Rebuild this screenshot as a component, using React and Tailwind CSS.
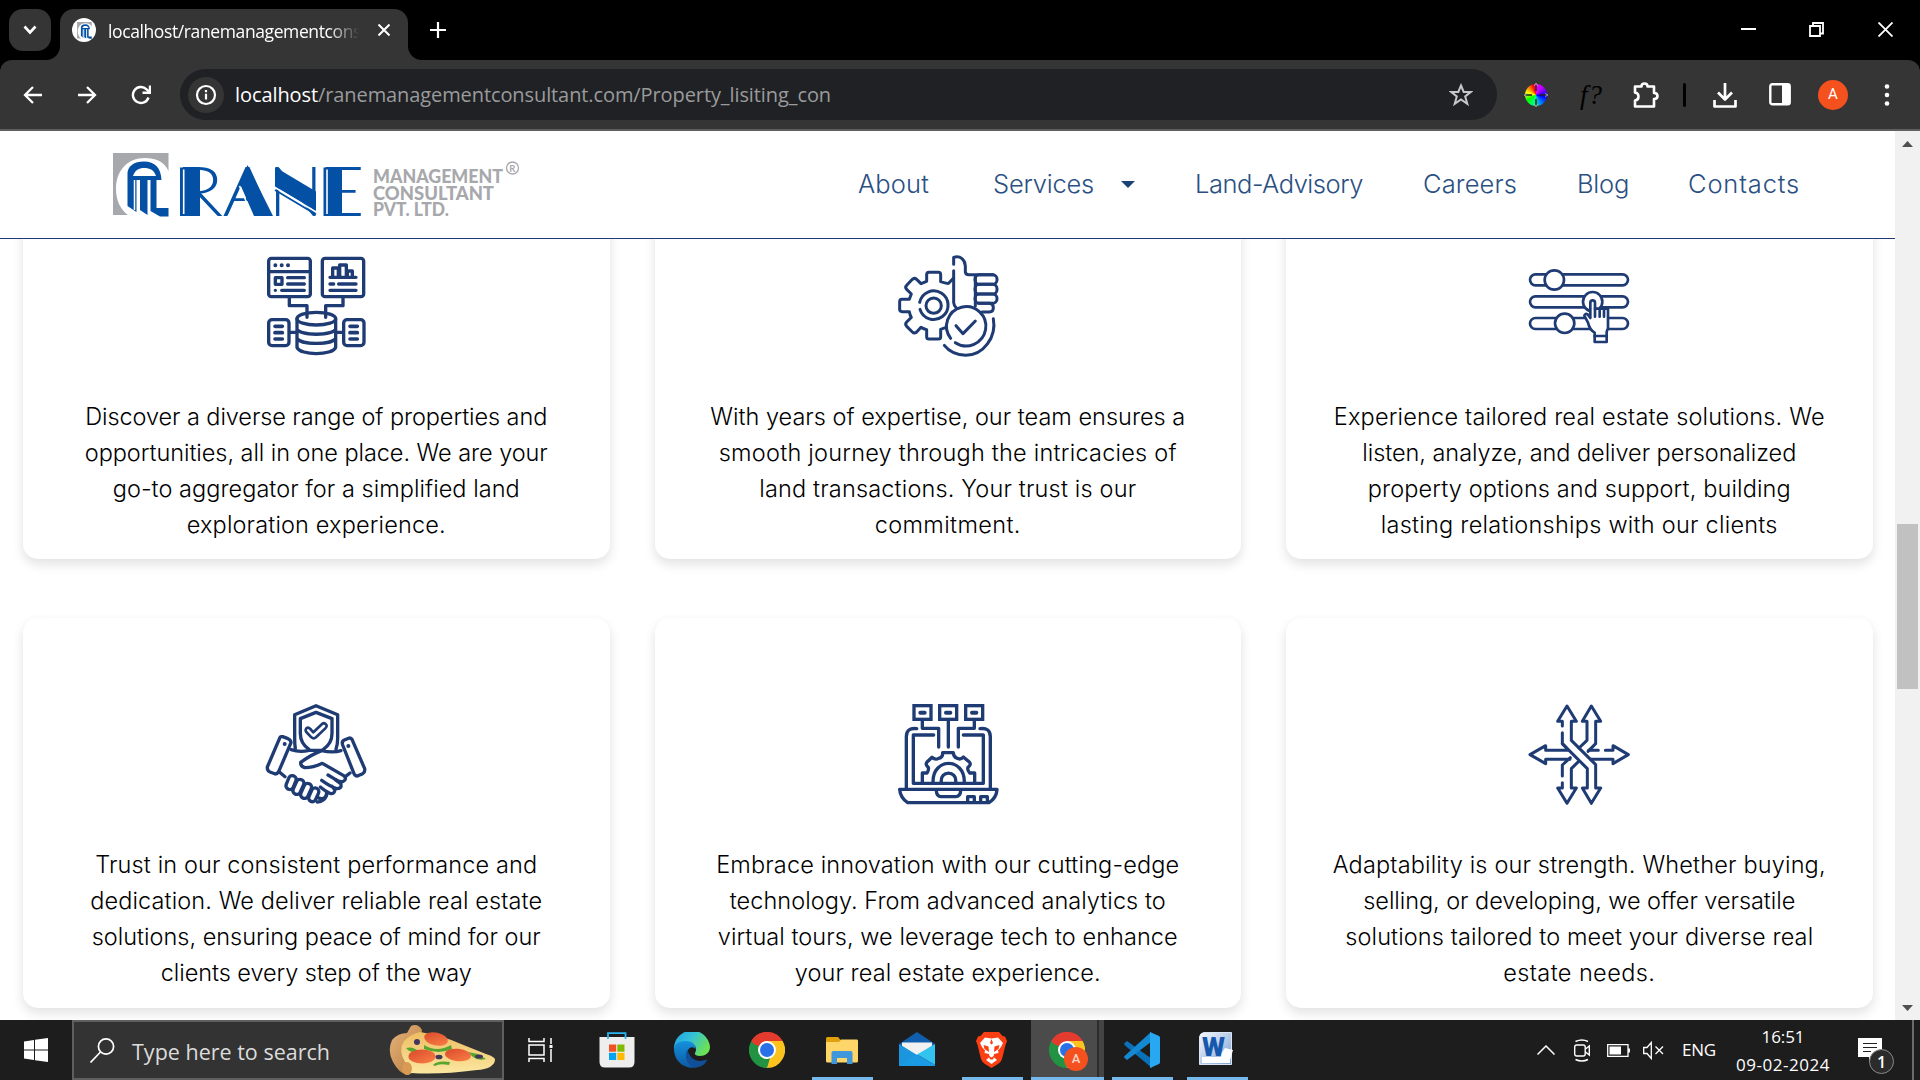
import { useLayoutEffect, useRef, useState } from "react";

/* Text run whose tracking is tuned so that it fills the given width. */
function Fit({ w, children, className = "" }) {
  const ref = useRef(null);
  const [ls, setLs] = useState(0);
  useLayoutEffect(() => {
    const el = ref.current;
    const natural = el.getBoundingClientRect().width;
    setLs((w - natural) / el.textContent.length);
  }, [w]);
  return (
    <span ref={ref} className={"inline-block whitespace-nowrap " + className} style={{ letterSpacing: ls + "px" }}>
      {children}
    </span>
  );
}

const UI = "font-['Open_Sans','Noto_Sans',sans-serif]";
const PAGE = "font-['Inter',sans-serif]";

/* ---------- logo ---------- */
function Emblem() {
  return (
    <>
      <path d="M0 0H55.500V18C51 8 42 5 32 5C14 5 3 18 3 36C3 48 8 57 15 62H0Z" fill="#a7a8ac" />
      <path d="M14.500 53V20C15 13 21 8.500 31 8.500C42 8.500 48 15 48.500 27H43.500V55H55.500V63.500H47L37.500 58V27H34.500V62L27 57V27H23.500V59Z" fill="#0450a4" />
      <path d="M20 23C22 17 26 15 31 15C37 15 41 17 43 23Z" fill="#fff" />
      <path d="M21.500 27V57M36 27V60" stroke="#fff" strokeWidth="1.500" />
    </>
  );
}

function Logo() {
  return (
    <svg width="410" height="66" viewBox="0 0 410 66" className="block overflow-visible">
      <Emblem />
      <g fill="#0450a4" fontFamily="Lato, sans-serif" fontWeight="300" fontSize="68">
        <text x="61.500" y="63" textLength="49" lengthAdjust="spacingAndGlyphs">R</text>
        <text x="109.500" y="63" textLength="50" lengthAdjust="spacingAndGlyphs">A</text>
        <text x="155.500" y="63" textLength="54.500" lengthAdjust="spacingAndGlyphs">N</text>
        <text x="204" y="63" textLength="48" lengthAdjust="spacingAndGlyphs">E</text>
      </g>
      {/* heavy stems and diagonals of the wordmark, with their inlines */}
      <g fill="#0450a4">
        <path d="M67 14.500H87V63H67Z" />
        <path d="M134.500 12L160 63H141L127 31Z" />
        <path d="M162 14L203 38.500V58L162 33.500Z" />
        <path d="M210.500 14.500H229V63H210.500Z" />
      </g>
      <path d="M70.700 16.500V61M214 16.500V61M162 34.500L203 59M126.500 33L139.500 63" stroke="#fff" strokeWidth="1.600" fill="none" />
      <path d="M162 37L203 61.500" stroke="#0450a4" strokeWidth="1.800" fill="none" />
      <g fill="#a7a8ac" fontFamily="Lato, sans-serif" fontWeight="900" fontSize="19.500">
        <text x="260" y="30" textLength="130" lengthAdjust="spacingAndGlyphs">MANAGEMENT</text>
        <text x="260" y="46.500" textLength="121" lengthAdjust="spacingAndGlyphs">CONSULTANT</text>
        <text x="260" y="63" textLength="76" lengthAdjust="spacingAndGlyphs">PVT. LTD.</text>
      </g>
      <circle cx="399.500" cy="15" r="6" fill="none" stroke="#a7a8ac" strokeWidth="1.300" />
      <text x="396.300" y="18.500" fontFamily="Lato, sans-serif" fontWeight="700" fontSize="9.500" fill="#a7a8ac">R</text>
    </svg>
  );
}

/* ---------- card icons ---------- */
function CardIcon({ box, sw = 9, children }) {
  return (
    <svg width="100" height="100" viewBox={box} fill="none" stroke="#1f3b73" strokeWidth={sw} strokeLinecap="round" strokeLinejoin="round" className="block overflow-visible">
      {children}
    </svg>
  );
}

const AggregatorIcon = () => (
  <CardIcon box="78 48 300 300" sw={10}>
    <rect x="86" y="55" width="125" height="115" rx="8" />
    <path d="M88 95H209" />
    <path d="M106 76h.1M125 76h.1M144 76h.1" strokeWidth="12" />
    <rect x="106" y="113" width="20" height="20" />
    <path d="M143 113H193M143 132H193M106 151h.1M125 151H193" />
    <rect x="247" y="55" width="124" height="115" rx="8" />
    <path d="M270 112H348M278 110V84H295V110M299 110V75H319V110M322 110V93H337V110" />
    <path d="M270 132H281M296 132H348M270 151H348" />
    <path d="M148 172V197H201V232M309 172V197H257V232" />
    <ellipse cx="229" cy="236" rx="58" ry="19" />
    <path d="M171 236V322C180 347 278 347 287 322V236M171 267C182 288 276 288 287 267M171 295C182 315 276 315 287 295" />
    <path d="M150 277H168M290 277H308" />
    <rect x="86" y="239" width="61" height="78" rx="10" />
    <rect x="311" y="239" width="61" height="78" rx="10" />
    <path d="M105 259H127M105 278H127M105 297H127M330 259H352M330 278H352M330 297H352" strokeWidth="11" />
  </CardIcon>
);

const ExpertiseIcon = () => (
  <CardIcon box="52 48 300 300">
    <path d="M218 115L204 130Q196 131 180 125V104Q180 97 173 97H145Q138 97 138 104V124Q128 128 121 131L108 118Q101 112 95 118L78 136Q72 142 78 148L92 162Q88 172 86 178H64Q57 178 57 185V208Q57 215 64 215H86Q88 226 92 232L78 246Q72 252 78 259L95 276Q101 282 108 276L121 262Q130 267 138 269V290Q138 297 145 297H173Q180 297 180 290V268Q188 265 196 262" />
    <path d="M117 187A43 43 0 1 1 118 208" />
    <circle cx="159" cy="197" r="23" />
    <path d="M219 73V52C240 46 253 60 254 78V96Q255 104 264 104H338M219 92V188Q220 198 227 204M284 107V198" />
    <rect x="283" y="104" width="66" height="29" rx="13" />
    <rect x="283" y="133" width="66" height="29" rx="13" />
    <rect x="283" y="162" width="66" height="28" rx="13" />
    <path d="M293 190H328Q338 192 338 203Q338 215 326 216H304" />
    <path d="M210 295A59 59 0 1 1 224 308" />
    <path d="M226 257L247 281L284 243M338 236C348 290 310 345 255 346Q213 344 191 316" />
  </CardIcon>
);

const TailoredIcon = () => (
  <CardIcon box="57 48 300 300" sw={8}>
    <rect x="60" y="103" width="294" height="33" rx="16.500" />
    <rect x="60" y="169" width="294" height="33" rx="16.500" />
    <rect x="60" y="234" width="294" height="33" rx="16.500" />
    <circle cx="133" cy="120" r="29" fill="#fff" />
    <circle cx="248" cy="185" r="29" fill="#fff" />
    <circle cx="164" cy="250" r="29" fill="#fff" />
    <path d="M241 234V188Q241 181 248 181Q255 181 255 188V206H294V265L290 275V306H254V278Q239 270 234 248L223 227Q225 218 234 224L241 234Z" fill="#fff" />
    <path d="M255 206V230M269 208V230M282 208V230M254 288H290" />
  </CardIcon>
);

const TrustIcon = () => (
  <CardIcon box="78 42 300 300" sw={10}>
    <path d="M166 176Q164 165 164 145V74L228 47L293 74V145Q293 162 288 178" />
    <path d="M207 178Q181 161 181 130V86L228 67L276 86V130Q276 161 250 178" />
    <path d="M197 119Q202 108 211 117L220 127L247 101Q255 97 260 106Q261 110 256 115L228 142Q221 148 214 142L199 126Q196 123 197 119Z" strokeWidth="8" />
    <path d="M120 142L82 231Q81 242 90 246L106 252Q112 252 116 245L153 158Q153 150 144 146L128 140Q122 139 120 142Z" />
    <path d="M336 148L374 236Q376 246 368 251L352 258Q345 258 342 251L308 165Q304 154 313 150L328 144Q333 144 336 148Z" />
    <path d="M134 162h.1M325 168h.1" strokeWidth="12" />
    <path d="M153 179Q180 188 207 181H242Q278 190 303 182M247 181Q213 194 182 217Q181 229 194 233Q220 233 247 220L311 257Q322 268 310 274Q299 278 286 268L264 255M118 246L135 260M330 249L316 260" />
    <path d="M286 269L303 282Q306 296 290 296Q275 292 245 271M276 289L285 300Q282 314 270 310Q258 305 241 291M259 305Q263 322 248 326Q239 328 228 318" />
    <rect x="142" y="256" width="23" height="43" rx="11" transform="rotate(22 153 277)" fill="#fff" />
    <rect x="164" y="267" width="23" height="47" rx="11" transform="rotate(24 175 290)" fill="#fff" />
    <rect x="187" y="279" width="23" height="47" rx="11" transform="rotate(24 198 302)" fill="#fff" />
    <rect x="210" y="293" width="22" height="43" rx="11" transform="rotate(24 221 315)" fill="#fff" />
    <path d="M232 336Q254 336 260 314" />
  </CardIcon>
);

const InnovationIcon = () => (
  <CardIcon box="52 42 300 300" sw={10}>
    <g strokeLinejoin="miter">
      <rect x="100" y="47" width="51" height="41" />
      <rect x="177" y="47" width="51" height="41" />
      <rect x="255" y="47" width="51" height="41" />
    </g>
    <path d="M119 68H132M196 68H209M274 68H287" strokeWidth="12" />
    <path d="M125 90V115H174V171M203 90V171M281 90V115H233V171" />
    <path d="M108 116Q77 112 77 140V294M298 116Q329 112 329 140V294M159 135H98V280H308V135H248" />
    <path d="M57 298H349Q348 323 325 338H81Q59 323 57 298ZM167 302Q168 320 181 320H225Q239 320 240 302" />
    <path d="M125 275V249H139Q145 240 143 232Q132 224 140 215L154 202Q164 211 174 205Q187 202 186 188H218Q218 200 229 205Q240 210 248 201L266 216Q273 224 262 232Q259 240 267 249H282V275M157 275C157 202 251 202 251 275M182 277C177 240 230 240 225 277" />
    <path d="M261 336V320H281V336M300 336V320H320V336" />
  </CardIcon>
);

const AdaptIcon = () => (
  <CardIcon box="57 42 300 300">
    <path d="M157 108V94H143L171 48L199 94H184V151L207 174M157 128V161L232 236V294H217L244 340L272 294H257V224L184 151" />
    <path d="M157 161L168 172M231 151L207 174M231 151V94H217L244 48L272 94H257V161L234 184" />
    <path d="M265 181H236M286 181H309V167L355 194L309 221V208H242M174 181H107V167L60 194L107 221V208H180" />
    <path d="M157 258V225L181 203M157 278V294H143L171 340L199 294H184V236L206 214" />
  </CardIcon>
);

const CARDS = [
  { Icon: AggregatorIcon, lines: [["Discover a diverse range of properties and", 462], ["opportunities, all in one place. We are your", 463], ["go-to aggregator for a simplified land", 407], ["exploration experience.", 259]] },
  { Icon: ExpertiseIcon, lines: [["With years of expertise, our team ensures a", 475], ["smooth journey through the intricacies of", 458], ["land transactions. Your trust is our", 377], ["commitment.", 146]] },
  { Icon: TailoredIcon, lines: [["Experience tailored real estate solutions. We", 491], ["listen, analyze, and deliver personalized", 434], ["property options and support, building", 423], ["lasting relationships with our clients", 397]] },
  { Icon: TrustIcon, lines: [["Trust in our consistent performance and", 442], ["dedication. We deliver reliable real estate", 452], ["solutions, ensuring peace of mind for our", 449], ["clients every step of the way", 311]] },
  { Icon: InnovationIcon, lines: [["Embrace innovation with our cutting-edge", 463], ["technology. From advanced analytics to", 436], ["virtual tours, we leverage tech to enhance", 460], ["your real estate experience.", 306]] },
  { Icon: AdaptIcon, lines: [["Adaptability is our strength. Whether buying,", 493], ["selling, or developing, we offer versatile", 432], ["solutions tailored to meet your diverse real", 468], ["estate needs.", 152]] },
];

function Card({ Icon, lines }) {
  return (
    <article className="flex flex-col items-center rounded-[15px] bg-white pt-[86px] shadow-[0_5px_12px_rgba(0,0,0,0.12)]">
      <Icon />
      <p className="mt-[43px] flex flex-col items-center text-[23.500px] leading-[36px] font-light text-black">
        {lines.map(([t, w]) => (
          <Fit key={t} w={w}>{t}</Fit>
        ))}
      </p>
    </article>
  );
}

/* ---------- browser chrome ---------- */
function TabStrip() {
  return (
    <div className="flex h-[60px] items-start bg-black pt-[9px] text-white">
      <button className="ml-[9px] grid size-[42px] place-items-center rounded-[14px] bg-[#353535]">
        <svg width="14" height="10" viewBox="0 0 14 10" fill="none" stroke="#fff" strokeWidth="2.600"><path d="M1.500 1.500L7 7.500L12.500 1.500" /></svg>
      </button>
      <div className="relative ml-[9px] flex h-[51px] w-[348px] items-start rounded-t-[14px] bg-[#353535]">
        <svg className="absolute bottom-0 -left-[14px]" width="14" height="14"><path d="M14 0V14H0A14 14 0 0 0 14 0Z" fill="#353535" /></svg>
        <svg className="absolute -right-[14px] bottom-0" width="14" height="14"><path d="M0 0V14H14A14 14 0 0 1 0 0Z" fill="#353535" /></svg>
        <span className="mt-[9px] ml-[12px] grid size-6 place-items-center rounded-full bg-white">
          <svg width="15" height="17" viewBox="0 0 56 64"><Emblem /></svg>
        </span>
        <span className={"mt-[6px] ml-[12px] w-[252px] overflow-hidden text-[17.500px] leading-[32px] text-white [mask-image:linear-gradient(to_right,#000_220px,transparent_251px)] " + UI}>
          <Fit w={253}>localhost/ranemanagementcons</Fit>
        </span>
        <svg className="mt-[15px] ml-[18px]" width="12" height="12" viewBox="0 0 12 12" stroke="#fff" strokeWidth="2"><path d="M.5 .5L11.500 11.500M11.500 .5L.5 11.500" /></svg>
      </div>
      <svg className="mt-[13px] ml-[22px]" width="16" height="16" viewBox="0 0 16 16" stroke="#fff" strokeWidth="2.200"><path d="M8 0V16M0 8H16" /></svg>
      <div className="mt-[13px] mr-[27px] ml-auto flex items-center">
        <svg width="15" height="15" stroke="#fff" strokeWidth="2"><path d="M0 7H15" /></svg>
        <svg className="ml-[53px]" width="15" height="15" fill="none" stroke="#fff" strokeWidth="1.800"><path d="M1 4H11V14H1ZM4 3.500V1H14V11.500H11.500" /></svg>
        <svg className="ml-[54px]" width="15" height="15" stroke="#fff" strokeWidth="1.800"><path d="M.5 .5L14.500 14.500M14.500 .5L.5 14.500" /></svg>
      </div>
    </div>
  );
}

function Toolbar() {
  return (
    <div className="bg-black">
      <div className="flex h-[71px] items-center rounded-t-[12px] border-b-2 border-[#5f5f5f] bg-[#353535]">
        <svg className="ml-[23px]" width="20" height="20" viewBox="0 0 20 20" fill="none" stroke="#fff" strokeWidth="2.300"><path d="M19 10H2.500M10 2L2 10L10 18" /></svg>
        <svg className="ml-[34px]" width="20" height="20" viewBox="0 0 20 20" fill="none" stroke="#fff" strokeWidth="2.300"><path d="M1 10H17.500M10 2L18 10L10 18" /></svg>
        <svg className="ml-[34px]" width="20" height="20" viewBox="0 0 20 20" fill="none" stroke="#fff" strokeWidth="2.400"><path d="M17.500 12.500A8 8 0 1 1 15.600 4.300L18 6.500" /><path d="M19 .5V7.800H11.500" /></svg>
        <div className="ml-[29px] flex h-[51px] w-[1317px] items-center rounded-full bg-[#202124]">
          <span className="ml-2 grid size-9 place-items-center rounded-full bg-[#353535]">
            <svg width="22" height="22" viewBox="0 0 22 22" fill="none" stroke="#fff" strokeWidth="2.200"><circle cx="11" cy="11" r="9" /><path d="M11 9.800V15.500M11 6V8.200" /></svg>
          </span>
          <div className={"ml-[11px] text-[20px] leading-[30px] text-[#9a9b9d] " + UI}>
            <Fit w={83} className="text-white">localhost</Fit>
            <Fit w={513}>/ranemanagementconsultant.com/Property_lisiting_con</Fit>
          </div>
          <svg className="mr-6 ml-auto" width="24" height="24" viewBox="0 0 24 24" fill="none" stroke="#c7c7c7" strokeWidth="2"><path d="M12 2.500L14.700 9H21.700L16.200 13.400L18.300 20.800L12 16.500L5.700 20.800L7.800 13.400L2.300 9H9.300Z" /></svg>
        </div>
        <span className="relative ml-[27px] grid size-6 place-items-center">
          <span className="size-[22px] rounded-full bg-[conic-gradient(#f0f,#a0f_45deg,#00f_100deg,#08f_150deg,#0f8_190deg,#0f0_240deg,#ff0_285deg,#f80_315deg,#f00_345deg,#f0f)]" />
          <svg className="absolute inset-0" width="24" height="24" stroke="#222" strokeWidth="1.500"><path d="M12 0V8M12 16V24M0 12H8M16 12H24" /><path d="M12 0L10.500 3M12 0L13.500 3M12 24L10.500 21M12 24L13.500 21M0 12L3 10.500M0 12L3 13.500M24 12L21 10.500M24 12L21 13.500" stroke="#bbb" strokeWidth=".8" /></svg>
        </span>
        <span className="ml-[32px] w-[23px] font-['Liberation_Serif',serif] text-[27px] leading-[30px] text-black italic">
          <Fit w={23}>f?</Fit>
        </span>
        <svg className="ml-[30px]" width="26" height="28" viewBox="0 0 26 28" fill="none" stroke="#fff" strokeWidth="2.600" strokeLinejoin="round"><path d="M2 5.500H8.500Q8.500 2.500 11.500 2.500Q14.500 2.500 14.500 5.500H21V12Q24.500 12 24.500 15Q24.500 18 21 18V25.500H2V19.500Q5.500 19 5.500 15.500Q5.500 12 2 11.500Z" /></svg>
        <span className="ml-[24px] h-6 w-[3px] rounded bg-black" />
        <svg className="ml-[27px]" width="24" height="26" viewBox="0 0 24 26" fill="none" stroke="#fff" strokeWidth="2.700"><path d="M12 1V17M5 10.500L12 17.500L19 10.500M1.500 18V24.500H22.500V18" strokeLinejoin="round" /></svg>
        <svg className="ml-[32px]" width="22" height="23" viewBox="0 0 22 23"><rect x="1.300" y="1.300" width="19.400" height="20" rx="2" fill="none" stroke="#fff" strokeWidth="2.400" /><path d="M13 1H21V22H13Z" fill="#fff" /></svg>
        <span className="ml-[27px] grid size-[30px] place-items-center rounded-full bg-[#f4511e] font-['Roboto',sans-serif] text-[15px] text-white">A</span>
        <svg className="ml-[36px]" width="6" height="24" fill="#fff"><circle cx="3" cy="3.500" r="2.300" /><circle cx="3" cy="12" r="2.300" /><circle cx="3" cy="20.500" r="2.300" /></svg>
      </div>
    </div>
  );
}

function SiteHeader() {
  return (
    <header className="relative z-10 flex h-[108px] items-start border-b border-[#1f3b73] bg-white text-[25.500px] leading-[36px] font-light text-[#2a5083]">
      <div className="mt-[22px] ml-[113px] w-[410px]"><Logo /></div>
      <nav className="mt-[35px] ml-[335px] flex items-center">
        <Fit w={71}>About</Fit>
        <Fit w={101} className="ml-[64px]">Services</Fit>
        <svg className="ml-[27px]" width="14" height="7" fill="#1f4275"><path d="M0 0H14L7 7Z" /></svg>
        <Fit w={168} className="ml-[60px]">Land-Advisory</Fit>
        <Fit w={94} className="ml-[60px]">Careers</Fit>
        <Fit w={52} className="ml-[60px]">Blog</Fit>
        <Fit w={112} className="ml-[59px]">Contacts</Fit>
      </nav>
    </header>
  );
}

function Scrollbar() {
  return (
    <div className="flex w-[25px] flex-col items-center bg-[#f1f1f1]">
      <svg className="mt-[10px]" width="11" height="6" fill="#505050"><path d="M0 6L5.500 0L11 6Z" /></svg>
      <div className="mt-[377px] h-[165px] w-[21px] bg-[#c1c1c1]" />
      <svg className="mt-auto mb-[9px]" width="11" height="6" fill="#505050"><path d="M0 0L5.500 6L11 0Z" /></svg>
    </div>
  );
}

/* ---------- taskbar ---------- */
const Pizza = () => (
  <svg width="107" height="52" viewBox="0 0 107 52">
    <defs>
      <linearGradient id="crust" x1="0" y1="0" x2="1" y2="1"><stop offset="0" stopColor="#e5b47c" /><stop offset="1" stopColor="#b97a3c" /></linearGradient>
      <linearGradient id="cheese" x1="0" y1="0" x2="0" y2="1"><stop offset="0" stopColor="#eebd62" /><stop offset="1" stopColor="#fbe7a0" /></linearGradient>
      <linearGradient id="pep" x1="0" y1="0" x2="1" y2="1"><stop offset="0" stopColor="#d9482a" /><stop offset="1" stopColor="#fb8147" /></linearGradient>
    </defs>
    <path d="M22 2Q29-1 33 6Q33 12 26 14L24 44Q25 50 18 51Q10 49 4 38Q-2 27 3 16Q9 9 18 9Z" fill="url(#crust)" />
    <path d="M31 8Q55 12 72 20L97 30Q107 33 106 36.500Q104 45 88 46Q50 51 22 49Q21 42 16 38Q9 26 15 17Q22 10 31 8Z" fill="url(#cheese)" />
    <ellipse cx="18" cy="44.500" rx="5" ry="6.500" fill="#d99a54" />
    <path d="M35 21Q48 29 62 21L63 25Q50 31 35 25ZM17 24Q24 22 29 27Q22 30 17 24ZM44 41Q48 36 61 38L60 41Q50 39 46 42ZM79 28L89 30L97 35Q89 37 84 33Z" fill="#55a52f" />
    <ellipse cx="47" cy="15" rx="12" ry="6.500" fill="url(#pep)" transform="rotate(12 47 15)" />
    <ellipse cx="33" cy="32.500" rx="13.500" ry="7" fill="url(#pep)" />
    <ellipse cx="69" cy="31" rx="13" ry="6.200" fill="url(#pep)" transform="rotate(5 69 31)" />
    <g fill="#43365c"><circle cx="28" cy="18" r="3" /><ellipse cx="50" cy="33" rx="3.500" ry="2.300" /><ellipse cx="90" cy="32.500" rx="4" ry="2" /></g>
  </svg>
);

const TaskView = () => (
  <svg className="mr-[2px]" width="25" height="24" fill="none" stroke="#fff" strokeWidth="1.500"><path d="M1 0V3.500H16V0M1 24V20.500H16V24M1 7H16V17H1ZM23 0V6M23 11V24" /><path d="M21.500 8.500H24.500" strokeWidth="3" /></svg>
);

const Store = () => (
  <svg width="36" height="36" viewBox="0 0 36 36">
    <path d="M9 7V1.200H26.500V7" fill="none" stroke="#2bb5f2" strokeWidth="1.800" />
    <path d="M.5 5H35.500V30Q35.500 35.500 30 35.500H6Q.5 35.500 .5 30Z" fill="#eeeeef" />
    <path d="M9 7V5H26.500V7" fill="none" stroke="#2bb5f2" strokeWidth="1.800" strokeDasharray="2 17.500 2" />
    <path d="M10 12.500H17.200V19.700H10Z" fill="#f25022" /><path d="M18.300 12.500H25.500V19.700H18.300Z" fill="#7fba00" />
    <path d="M10 20.800H17.200V28H10Z" fill="#00a4ef" /><path d="M18.300 20.800H25.500V28H18.300Z" fill="#ffb900" />
  </svg>
);

const Edge = () => (
  <svg width="36" height="36" viewBox="0 0 36 36">
    <defs>
      <linearGradient id="edgeTop" x1="0" y1="0" x2="1" y2=".5"><stop offset="0" stopColor="#1b9de2" /><stop offset=".5" stopColor="#35c1d8" /><stop offset="1" stopColor="#6be154" /></linearGradient>
      <linearGradient id="edgeLow" x1="0" y1="0" x2="0" y2="1"><stop offset="0" stopColor="#1591dd" /><stop offset="1" stopColor="#0c59a4" /></linearGradient>
    </defs>
    <path d="M0 18A18 18 0 0 1 36 15C36 21 31 24 26 24C21 24 20 22 21.500 20C23.500 15 20 11 14 11C7 11 2 13 0 18Z" fill="url(#edgeTop)" />
    <path d="M0 18C0 12 5 9 12 9C18 9 22 13 21.500 17C19 14 15 15 13.500 19C11.500 26 17 35 23 35A18 18 0 0 1 0 18Z" fill="url(#edgeLow)" />
    <path d="M13.500 18C10 22 12 35 22 35.500Q30 35 33.500 27.500Q20 32 15 22Z" fill="#124f99" />
  </svg>
);

const ChromeBall = () => (
  <svg width="36" height="36" viewBox="0 0 36 36">
    <path d="M18 18L2.400 9A18 18 0 0 1 33.600 9Z" fill="#e33b2e" />
    <path d="M18 18L33.600 9A18 18 0 0 1 18 36Z" fill="#fcc31e" />
    <path d="M18 18L18 36A18 18 0 0 1 2.400 9Z" fill="#229342" />
    <path d="M18 9H33.600L25.500 22Z" fill="#fcc31e" /><path d="M2.400 9L10.500 22.500L18 9Z" fill="#229342" />
    <path d="M2.400 9A18 18 0 0 1 33.600 9H18L10.500 14Q5 13.500 2.400 9Z" fill="#e33b2e" />
    <path d="M25.800 22.500L18 36L14 27L21 26Z" fill="#fcc31e" /><path d="M10 21L21 26L18 36Z" fill="#229342" />
    <circle cx="18" cy="18" r="9" fill="#fff" /><circle cx="18" cy="18" r="7" fill="#2a70e8" />
  </svg>
);

const Folder = () => (
  <svg width="32" height="27" viewBox="0 0 32 27">
    <path d="M0 1.500Q0 0 1.500 0H12L15 3.500V8H0Z" fill="#e0a10c" />
    <path d="M0 5H13L15 2.500H31Q32 2.500 32 4V24Q32 25.500 30.500 25.500H1.500Q0 25.500 0 24Z" fill="#fdd568" />
    <path d="M5.500 27V16Q5.500 14 7.500 14H24.500Q26.500 14 26.500 16V27H21V21H11V27Z" fill="#3f97dc" />
  </svg>
);

const Mail = () => (
  <svg className="mb-[2px]" width="36" height="34" viewBox="0 0 36 34">
    <path d="M0 12L18 0L36 12L18 24Z" fill="#0f5fae" />
    <path d="M3 10.500H33V14L18 24L3 14Z" fill="#f1f1f1" />
    <path d="M0 12L36 34H0Z" fill="#1b96de" /><path d="M36 12L18 22.500L36 33Z" fill="#32c3f1" /><path d="M0 34L18 22.500L36 33V34Z" fill="#1a9be3" />
  </svg>
);

const Brave = () => (
  <svg width="31" height="36" viewBox="0 0 31 36">
    <path d="M8 0H23L26.500 4L29 4.500L31 9L29.500 13L26 27Q25 30 22 32L15.500 36L9 32Q6 30 5 27L1.500 13L0 9L2 4.500L4.500 4Z" fill="#fb3f13" />
    <path d="M9 5.500L15.500 6.500L22 5.500L27 11L25 15L22 18.500L22.500 21L18 22L17.500 25L21 28L15.500 32L10 28L13.500 25L13 22L8.500 21L9 18.500L6 15L4 11Z" fill="#fff" />
    <path d="M7.500 13L12.500 14.500L13 20L8.500 17ZM23.500 13L18.500 14.500L18 20L22.500 17ZM15.500 7L17 11L15.500 12.500L14 11ZM12.500 23.500L15.500 25.500L18.500 23.500L17 27.500H14Z" fill="#fb3f13" />
  </svg>
);

const ChromeProfile = () => (
  <span className="relative block size-9">
    <ChromeBall />
    <span className="absolute top-[15px] left-[15px] grid size-6 place-items-center rounded-full bg-[#f4511e] font-['Roboto',sans-serif] text-[13px] font-medium text-[#fbd5c8]">A</span>
  </span>
);

const Code = () => (
  <svg width="36" height="36" viewBox="0 0 36 36">
    <path d="M0 11.500L3 9L28 27V36L1 13.500Z" fill="#0a70b8" />
    <path d="M0 24.500L27 0V10L3 28L.5 26Z" fill="#1488d0" />
    <path d="M26 0L35 4Q36 4.500 36 6V30Q36 31.500 35 32L26 36Z" fill="#29a8f2" />
  </svg>
);

const Word = () => (
  <svg className="mr-px mb-[3px]" width="34" height="34" viewBox="0 0 34 34">
    <defs><linearGradient id="wordBg" x1="0" y1="0" x2="1" y2="1"><stop offset="0" stopColor="#f6faff" /><stop offset="1" stopColor="#7a9fd4" /></linearGradient></defs>
    <path d="M5 .5H32.500V32.500H.5V5Q1 1 5 .5Z" fill="url(#wordBg)" stroke="#dbe6f5" />
    <path d="M3 25H31V31H3Z" fill="#fff" />
    <path d="M22 22L26 16L34 18L31 28L22 29Z" fill="#fff" />
    <text x="3" y="24" fontFamily="Roboto, sans-serif" fontWeight="900" fontSize="25" fill="#1558ad" textLength="23" lengthAdjust="spacingAndGlyphs">W</text>
  </svg>
);

const APPS = [
  { Icon: TaskView }, { Icon: Store }, { Icon: Edge }, { Icon: ChromeBall },
  { Icon: Folder, open: true }, { Icon: Mail }, { Icon: Brave, open: true },
  { Icon: ChromeProfile, open: true, active: true }, { Icon: Code, open: true }, { Icon: Word, open: true },
];

function AppSlot({ Icon, open, active }) {
  return (
    <div className="flex h-full w-[75px] justify-center">
      <div className={"flex h-full flex-col " + (active ? "w-[73px] bg-[linear-gradient(to_right,#4b4b4b_66px,#2c2c2c_66px,#2c2c2c_68px,#444_68px)]" : "w-[61px]")}>
        <div className={"flex flex-1 items-center justify-center pt-[3px] " + (active ? "pr-px" : "pr-[2px]")}><Icon /></div>
        <div className={"h-[3px] " + (open ? "bg-[#76b9ed]" : "bg-transparent")} />
      </div>
    </div>
  );
}

function Taskbar() {
  return (
    <div className={"flex h-[60px] items-center bg-[#1d1d1d] text-white " + UI}>
      <svg className="ml-6" width="24" height="24" viewBox="0 0 24 24" fill="#fff"><path d="M0 3.500L10 2V11.500H0ZM11 1.800L24 0V11.500H11ZM0 12.500H10V22L0 20.500ZM11 12.500H24V24L11 22.200Z" /></svg>
      <div className="ml-6 flex h-full w-[432px] items-center border-2 border-[#5f5f5f] bg-[#333]">
        <svg className="ml-4" width="25" height="25" fill="none" stroke="#fff" strokeWidth="1.700"><circle cx="16" cy="8.500" r="7.600" /><path d="M10.500 14L.5 24.500" /></svg>
        <span className="mt-[3px] ml-[17px] text-[21.500px] leading-[30px] text-[#dcdcdc]"><Fit w={198}>Type here to search</Fit></span>
        <span className="mr-[6px] ml-auto"><Pizza /></span>
      </div>
      <div className="ml-px flex h-full">{APPS.map((a, i) => <AppSlot key={i} {...a} />)}</div>
      <div className="ml-auto flex h-full items-center">
        <svg width="18" height="10" fill="none" stroke="#fff" strokeWidth="1.500"><path d="M.5 9.500L9 1L17.500 9.500" /></svg>
        <svg className="ml-[19px]" width="16" height="23" fill="none" stroke="#fff" strokeWidth="1.400"><rect x=".7" y="6" width="10.500" height="11" rx="2" /><path d="M11.500 10L15.300 7V16L11.500 13M1.500 2.500Q8-.5 14 2.500M1.500 20.500Q8 23.500 14 20.500" /></svg>
        <svg className="ml-[17px]" width="23" height="13" fill="none" stroke="#fff" strokeWidth="1.300"><path d="M.7 .7H21V12.300H.7ZM22.300 4.500V8.500" /><path d="M2.500 2.500H14V10.500H2.500Z" fill="#fff" stroke="none" /></svg>
        <svg className="ml-[13px]" width="21" height="19" fill="none" stroke="#fff" strokeWidth="1.300"><path d="M.7 6.500H4L8.300 1.500V17.500L4 12.500H.7ZM12.500 5.500L20 13M20 5.500L12.500 13" /></svg>
        <span className="ml-[18px] text-[17px]"><Fit w={34}>ENG</Fit></span>
        <div className="mt-px ml-5 flex w-[94px] flex-col items-center text-[17px] leading-[28px]">
          <Fit w={43}>16:51</Fit>
          <Fit w={94}>09-02-2024</Fit>
        </div>
        <div className="relative ml-7 h-6 w-6">
          <svg width="24" height="24"><path d="M0 0H24V19H16L11 24V19H0Z" fill="#fff" /><path d="M5 5.500H19M5 9.500H19M5 13.500H13" stroke="#222" strokeWidth="1.200" /></svg>
          <span className="absolute top-[11px] left-[11px] grid size-[25px] place-items-center rounded-full border border-[#8a8a8a] bg-[#2b2b2b] text-[16px] leading-none font-semibold">1</span>
        </div>
        <div className="mr-[6px] ml-[30px] h-full w-[2px] bg-[#6b6b6b]" />
      </div>
    </div>
  );
}

export default function App() {
  return (
    <div className="flex h-[1080px] w-[1920px] flex-col overflow-hidden">
      <TabStrip />
      <Toolbar />
      <div className={"flex h-[889px] overflow-hidden bg-white " + PAGE}>
        <main className="h-full w-[1895px] overflow-hidden">
          <SiteHeader />
          <section className="-mt-[69px] grid grid-cols-3 grid-rows-[389px_390px] gap-x-[45px] gap-y-[59px] pr-[22.500px] pl-[23px]">
            {CARDS.map((c) => <Card key={c.lines[0][0]} {...c} />)}
          </section>
        </main>
        <Scrollbar />
      </div>
      <Taskbar />
    </div>
  );
}
